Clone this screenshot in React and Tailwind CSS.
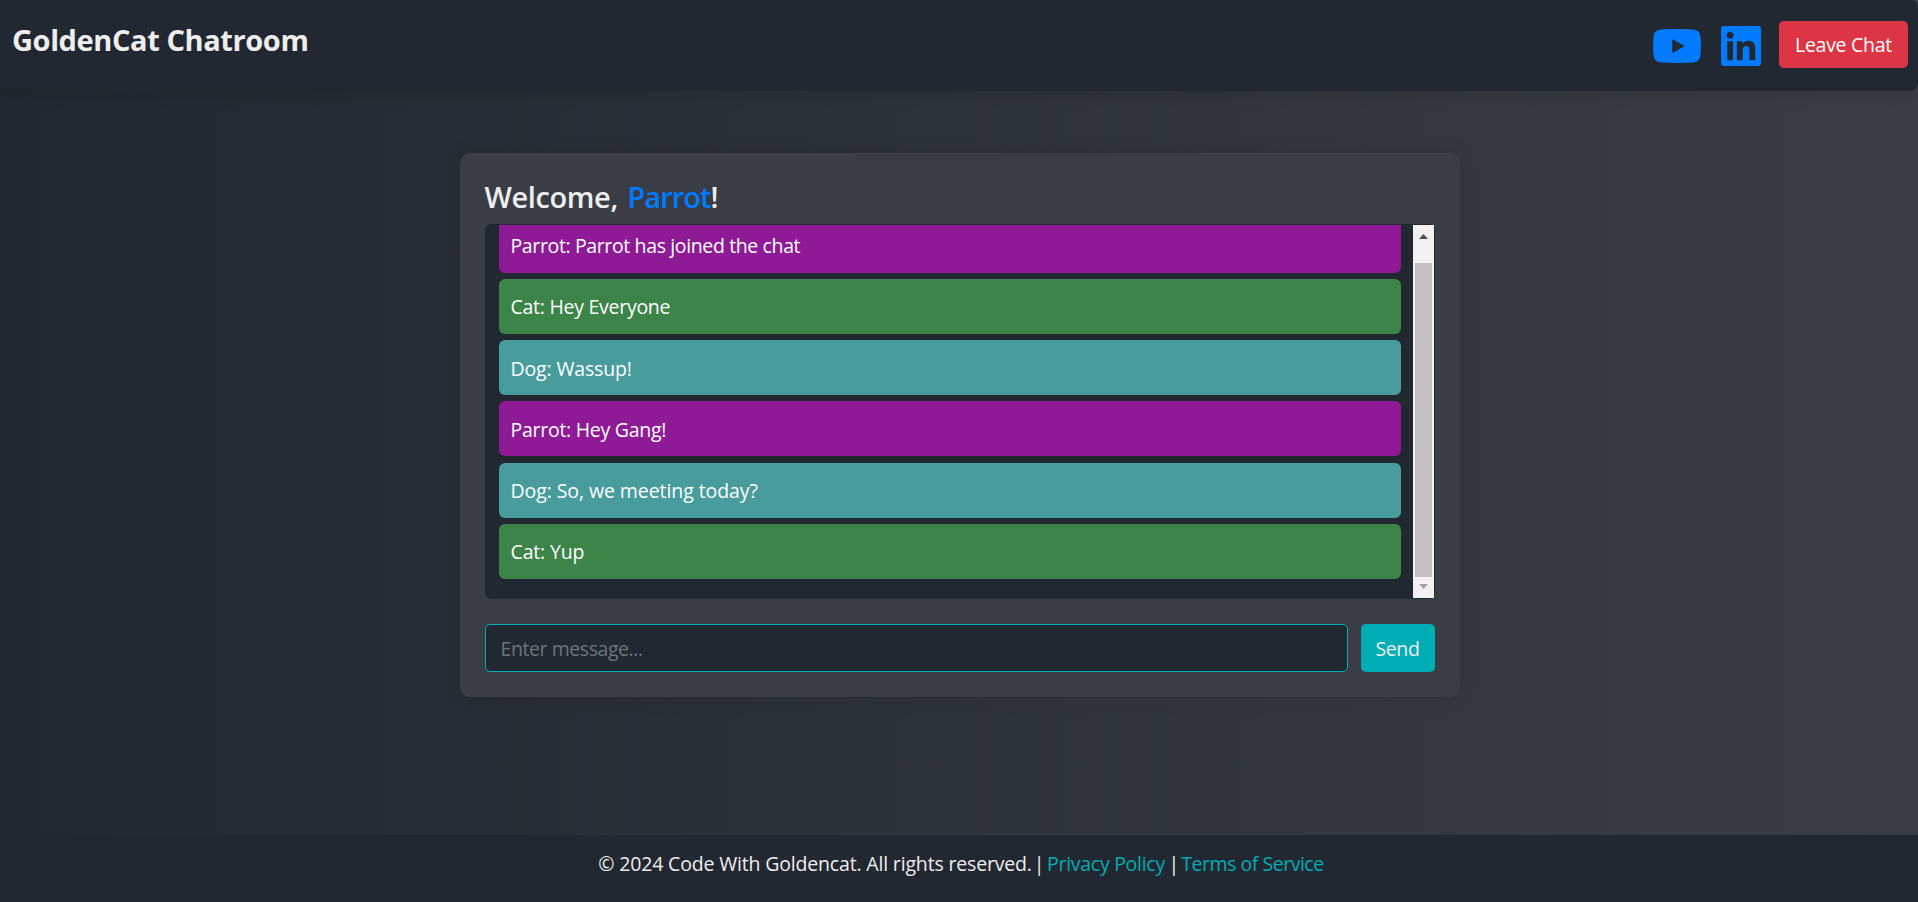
import React from "react";

const messages = [
  { text: "Parrot: Parrot has joined the chat", box: "bg-[#8e1a96] mt-[-7px] leading-[55px]", track: "tracking-[-0.37px]" },
  { text: "Cat: Hey Everyone", box: "bg-[#3c8447] leading-[55px]", track: "tracking-[-0.27px]" },
  { text: "Dog: Wassup!", box: "bg-[#499c9c] leading-[57px]", track: "tracking-[-0.15px]" },
  { text: "Parrot: Hey Gang!", box: "bg-[#8e1a96] leading-[57px]", track: "tracking-[-0.27px]" },
  { text: "Dog: So, we meeting today?", box: "bg-[#499c9c] mt-px leading-[55px]", track: "tracking-[-0.08px]" },
  { text: "Cat: Yup", box: "bg-[#3c8447] leading-[55px]", track: "tracking-[-0.15px]" },
];

function Header() {
  return (
    <header className="flex h-[91px] shrink-0 items-start justify-between rounded-lg bg-[#222831] pl-3 pr-[10px] shadow-[0_5px_12px_rgba(0,0,0,0.1)]">
      <h1 className="mt-[17px] text-[29px] font-bold leading-[45px] tracking-[-0.4px]"><span>GoldenCat Chatroom</span></h1>
      <div className="mt-[21px] flex">
        <svg className="mt-[5px] h-10 w-12 text-[#007bff]" viewBox="0 0 48 40" fill="currentColor">
          <path fillRule="evenodd" d="M24 3C36 3 41 3.5 43 4.2C45.500 5 46.700 7 47.200 9.500C48.200 15 48.200 25 47.200 30.500C46.700 33.500 45 35.300 42.500 36C37 37.300 11 37.300 5.500 36C3 35.300 1.300 33.500 .8 30.500C-.2 25 -.2 15 .8 9.500C1.300 6.500 3 4.700 5.500 4C9 3.200 16 3 24 3ZM19.200 13V27.200L31.500 20.100Z" />
        </svg>
        <svg className="ml-5 mt-[5px] h-10 w-10 text-[#007bff]" viewBox="0 0 448 448" fill="currentColor">
          <path d="M416 0H31.900C14.300 0 0 14.500 0 32.300v383.400C0 433.500 14.300 448 31.900 448H416c17.600 0 32-14.500 32-32.300V32.300C448 14.500 433.600 0 416 0zM135.400 384H69V170.200h66.500V384zm-33.200-243c-21.300 0-38.500-17.300-38.500-38.500S80.900 64 102.200 64c21.200 0 38.500 17.300 38.500 38.500 0 21.300-17.200 38.500-38.500 38.500zm282.100 243h-66.400V280c0-24.800-.5-56.700-34.500-56.700-34.600 0-39.900 27-39.900 54.900V384h-66.400V170.200h63.700v29.200h.9c8.900-16.800 30.600-34.500 62.900-34.500 67.200 0 79.700 44.300 79.700 101.900V384z" />
        </svg>
        <button className="ml-[18px] h-[47px] w-[129px] rounded-[5px] bg-[#dc3545] text-[19.5px] tracking-[-0.28px] text-white"><span>Leave Chat</span></button>
      </div>
    </header>
  );
}

function Scrollbar() {
  return (
    <div className="flex w-[21px] shrink-0 flex-col items-center bg-[#f1f1f1]">
      <svg className="mt-[9px] h-[5px] w-[9px]" viewBox="0 0 9 5"><path d="M0 5L4.500 0L9 5Z" fill="#505050" /></svg>
      <div className="mt-6 h-[314px] w-[17px] bg-[#c1c1c1]" />
      <svg className="mt-[7px] h-[5px] w-[9px]" viewBox="0 0 9 5"><path d="M0 0L4.500 5L9 0Z" fill="#a3a3a3" /></svg>
    </div>
  );
}

export default function App() {
  return (
    <div className="flex h-[902px] flex-col overflow-hidden bg-linear-to-r from-[#222831] to-[#393e46] font-['Open_Sans',sans-serif] text-[#eeeeee]">
      <Header />
      <main className="flex flex-1 justify-center pt-[62px]">
        <section className="ml-px h-[544px] w-[1000px] rounded-[10px] bg-[#393e46] px-[25px] pt-[26px] shadow-[0_0_20px_rgba(0,0,0,0.1)]">
          <h2 className="h-[45px] whitespace-pre text-[29px] font-semibold leading-[36px] tracking-[-0.4px]"><span>Welcome, </span><span className="ml-[2.5px] tracking-[-1px] text-[#007bff]">Parrot</span><span>!</span></h2>
          <div className="flex h-[375px] rounded-[6px] border border-[#222831] bg-[#222831]">
            <div className="flex flex-1 flex-col gap-[6px] overflow-hidden pl-[13px] pr-3">
              {messages.map((m) => (
                <div key={m.text} className={"h-[55px] shrink-0 rounded-[6px] pl-3 text-[19.5px] text-white " + m.box}>
                  <span className={m.track}>{m.text}</span>
                </div>
              ))}
            </div>
            <Scrollbar />
          </div>
          <form className="mt-[25px] flex h-12 gap-[13px]" onSubmit={(e) => e.preventDefault()}>
            <div className="flex flex-1 items-center rounded-[5px] border border-[#00adb5] bg-[#222831] pl-[15px] pt-0.5 text-[19.5px] text-[#6c757d]"><span className="tracking-[-0.43px]">Enter message...</span></div>
            <button className="w-[74px] rounded-[5px] bg-[#00adb5] pt-0.5 text-[19.5px] tracking-[-0.4px]"><span>Send</span></button>
          </form>
        </section>
      </main>
      <footer className="h-[67px] shrink-0 whitespace-pre bg-[#222831] pl-1 pt-[14px] text-center text-[19.5px] leading-[30px]">
        <span className="mr-[-2px] tracking-[-0.17px]">© 2024 Code With Goldencat. All rights reserved.</span><span className="tracking-[-1.2px]"> | </span><a className="tracking-[-0.28px] text-[#00adb5]">Privacy Policy</a><span className="tracking-[-1.5px]"> | </span><a className="tracking-[-0.47px] text-[#00adb5]">Terms of Service</a>
      </footer>
    </div>
  );
}
